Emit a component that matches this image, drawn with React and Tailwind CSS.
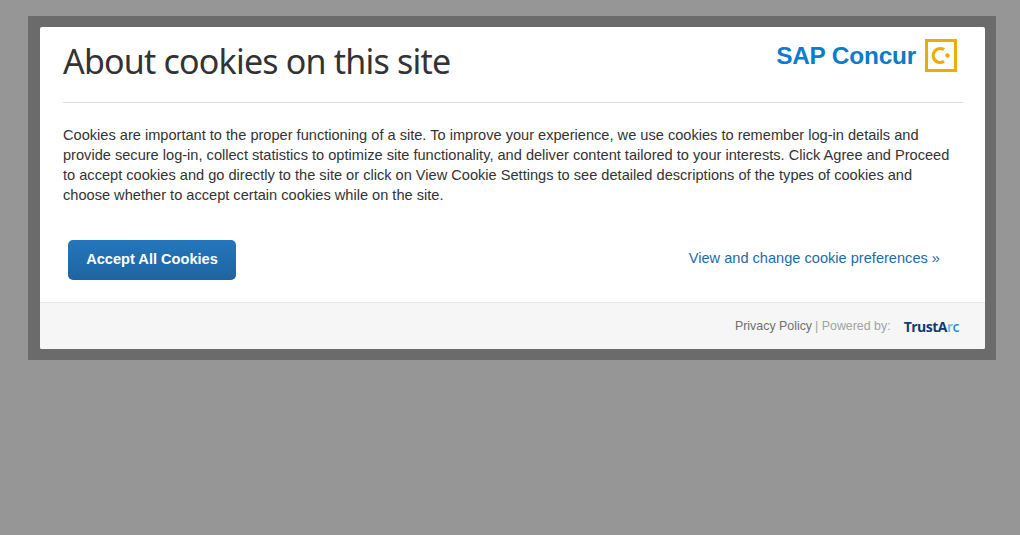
const App = () => {
  return (
    <div className="min-h-screen bg-[#969696] pt-4 pl-7 font-['Liberation_Sans',Arial,sans-serif]">
      <div className="w-[968px] bg-[#6b6b6b] pt-[11px] pb-[11px] pl-[12px] pr-[11px]">
        <div className="bg-white rounded-[2px] overflow-hidden">
          <div className="h-[275px] pl-[23px] pr-[22px]">
            <div className="h-[76px] border-b border-[#dcdcdc] flex justify-between">
              <h1 className="font-['Noto_Sans',sans-serif] text-[34px] leading-[69px] text-[#333333] tracking-[-0.8px]">
                About cookies on this site
              </h1>
              <div className="flex items-start gap-[9px] pt-3 pr-[6px]">
                <span className="font-['Liberation_Sans',sans-serif] font-bold text-[24.4px] leading-[34px] tracking-[-0.2px] text-[#0a7cc9] whitespace-nowrap">
                  SAP Concur
                </span>
                <svg width="32" height="33" viewBox="0 0 32 33" className="shrink-0">
                  <rect x="1.5" y="1.5" width="29" height="30" fill="none" stroke="#f0ab00" strokeWidth="3" />
                  <path d="M19 10.6 A7 7 0 1 0 19 22.4" fill="none" stroke="#f0ab00" strokeWidth="3.2" />
                  <circle cx="22.5" cy="16.5" r="2.2" fill="#f0ab00" />
                </svg>
              </div>
            </div>
            <p className="mt-[22px] text-[14.6px] leading-[20px] text-[#333333]">
              Cookies are important to the proper functioning of a site. To improve your experience, we use cookies to remember log-in details and provide secure log-in, collect statistics to optimize site functionality, and deliver content tailored to your interests. Click Agree and Proceed to accept cookies and go directly to the site or click on View Cookie Settings to see detailed descriptions of the types of cookies and choose whether to accept certain cookies while on the site.
            </p>
            <div className="mt-[35px] flex justify-between items-center pl-[5px] pr-[23px]">
              <button className="w-[168px] h-10 rounded-[5px] bg-gradient-to-b from-[#2476bd] to-[#1e659f] text-white font-bold text-[14.6px]">
                Accept All Cookies
              </button>
              <a className="text-[14.6px] text-[#1f6aa6] -mt-[2px]">View and change cookie preferences »</a>
            </div>
          </div>
          <div className="h-[47px] bg-[#f6f6f6] border-t border-[#e8e8e8] flex items-center justify-end pr-[26px] text-[12.4px]">
            <span className="text-[#707070]">Privacy Policy</span>
            <span className="text-[#a3a3a3] ml-[3px]">| Powered by:</span>
            <span className="ml-[13px] font-['Open_Sans',sans-serif] font-bold text-[14px] tracking-[-0.5px] text-[#0e3b73]">
              TrustA<span className="text-[#6db3e2] font-semibold">r</span><span className="text-[#1b8fd8] font-semibold">c</span>
            </span>
          </div>
        </div>
      </div>
    </div>
  );
};

export default App;
